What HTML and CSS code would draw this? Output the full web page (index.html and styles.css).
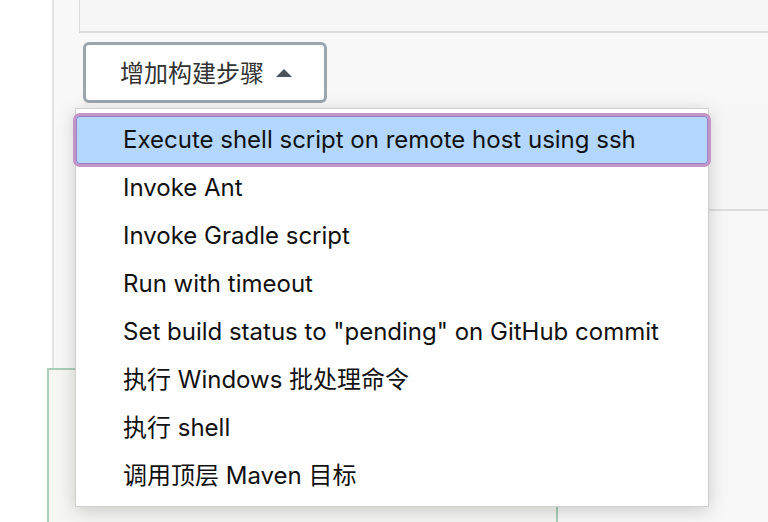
FILE: index.html
```html
<!DOCTYPE html>
<html lang="zh-CN">
<head>
<meta charset="utf-8">
<title>增加构建步骤</title>
<link rel="stylesheet" href="styles.css">
</head>
<body>
<div class="page">
  <aside class="side"></aside>
  <main class="main">
    <div class="top-box"></div>
    <button class="add-btn" type="button">增加构建步骤<span class="caret"></span></button>
    <div class="mid-box"></div>
    <div class="green-box"></div>
  </main>
</div>
<ul class="menu">
  <li class="item active">Execute shell script on remote host using ssh</li>
  <li class="item">Invoke Ant</li>
  <li class="item">Invoke Gradle script</li>
  <li class="item">Run with timeout</li>
  <li class="item">Set build status to "pending" on GitHub commit</li>
  <li class="item">执行 Windows 批处理命令</li>
  <li class="item">执行 shell</li>
  <li class="item">调用顶层 Maven 目标</li>
</ul>
</body>
</html>
```

FILE: styles.css
```css
* { box-sizing: border-box; }
html, body { margin: 0; padding: 0; }
body {
  width: 768px;
  height: 522px;
  overflow: hidden;
  background: #f8f8f8;
  font-family: Inter, "Noto Sans CJK SC", "Noto Sans", sans-serif;
  position: relative;
}
.page {
  display: flex;
  height: 522px;
}
.side {
  width: 54px;
  flex: none;
  background: #fff;
  border-right: 2px solid #e2e2e2;
}
.main {
  flex: 1;
  padding-left: 25px;
  display: flex;
  flex-direction: column;
  align-items: flex-start;
}
.top-box {
  width: 700px;
  height: 33px;
  border-left: 1px solid #dcdcdc;
  border-bottom: 2px solid #dcdcdc;
  background: #f7f7f7;
}
.add-btn {
  margin: 9px 0 0 4px;
  width: 244px;
  height: 61px;
  border: 3px solid #9ba6ae;
  border-radius: 6px;
  background: #fff;
  color: #333;
  font-family: "Noto Sans CJK SC", sans-serif;
  font-size: 24px;
  display: flex;
  align-items: center;
  justify-content: flex-start;
  gap: 12px;
  padding: 0 0 2px 34px;
}
.caret {
  width: 0;
  height: 0;
  border-left: 8px solid transparent;
  border-right: 8px solid transparent;
  border-bottom: 8px solid #4a535a;
  margin-top: 2px;
}
.mid-box {
  width: 700px;
  height: 108px;
  margin-top: 0;
  border-bottom: 2px solid #dedede;
  background: #f7f7f7;
}
.green-box {
  margin-top: 157px;
  margin-left: -32px;
  width: 511px;
  flex: 1;
  border: 2px solid #a8cfb9;
  border-bottom: none;
  background: #f6f7f3;
}
.menu {
  position: absolute;
  left: 75px;
  top: 108px;
  width: 634px;
  height: 399px;
  margin: 0;
  padding: 7px 0 0;
  list-style: none;
  background: #fff;
  border: 1px solid #d0d0d0;
  box-shadow: 0 4px 18px rgba(0, 0, 0, 0.18);
}
.item {
  height: 48px;
  line-height: 48px;
  padding-left: 47px;
  font-size: 24px;
  color: #111;
  white-space: nowrap;
}
.item.active {
  background: #b3d7ff;
  border-radius: 4px;
  box-shadow: inset 0 0 0 1px #9a7fc2;
  outline: 3px solid #c195c6;
  outline-offset: 0;
}
```
